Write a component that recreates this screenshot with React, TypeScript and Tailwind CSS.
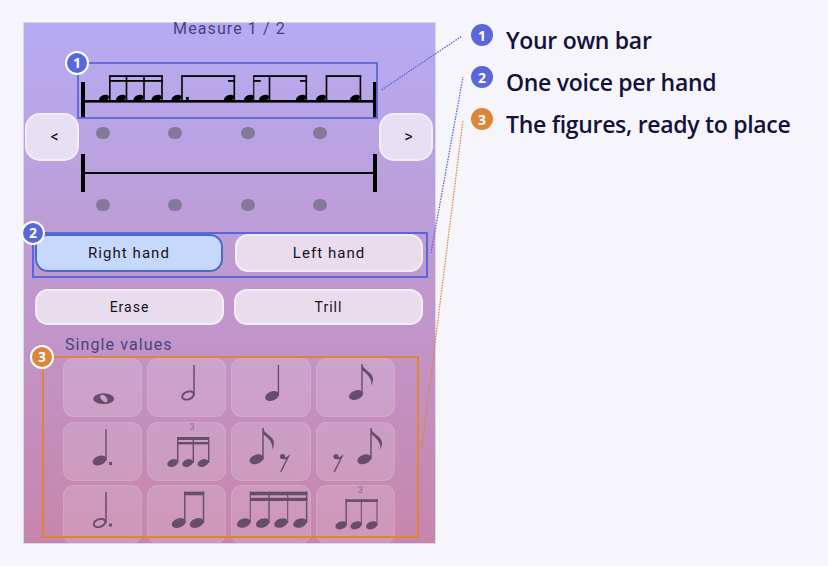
import React from "react";

const ROBOTO = "font-['Roboto',sans-serif]";

function Head({ x, y, rx = 5.2, ry = 3.2 }: { x: number; y: number; rx?: number; ry?: number }) {
  return <ellipse cx={x} cy={y} rx={rx} ry={ry} transform={`rotate(-22 ${x} ${y})`} />;
}

function FirstStaff() {
  const stems = [109.8, 126.5, 144, 162, 182, 234.3, 254, 269.5, 306.3, 326.5, 360.4];
  const heads = [104, 121, 138.5, 156.5, 176.5, 229, 249, 264, 301, 321, 355];
  return (
    <svg width="298" height="48" viewBox="80 72 298 48" className="block">
      <g fill="#000">
        {heads.map((x) => (
          <Head key={x} x={x} y={98.3} />
        ))}
        <rect x="81" y="82" width="4" height="36" />
        <rect x="373" y="82" width="4" height="36" />
        <rect x="84" y="100" width="290" height="2.6" />
        {stems.map((x) => (
          <rect key={x} x={x - 0.8} y="75.5" width={x === 254 ? 1.1 : 1.6} height="24.5" />
        ))}
        <rect x="109" y="75.2" width="54" height="1.8" />
        <rect x="109" y="80" width="54" height="1.8" />
        <rect x="181.2" y="75.2" width="54" height="1.8" />
        <rect x="228" y="80" width="7" height="1.8" />
        <rect x="253.5" y="75.2" width="53.6" height="1.8" />
        <rect x="254" y="80" width="6.8" height="1.8" />
        <rect x="300" y="80" width="7" height="1.8" />
        <rect x="325.8" y="75.2" width="35.4" height="1.8" />
        <rect x="186" y="97" width="2.8" height="2.8" />
      </g>
    </svg>
  );
}

function SecondStaff() {
  return (
    <svg width="298" height="38" viewBox="80 154 298 38" className="block">
      <g fill="#000">
        <rect x="81" y="154" width="4" height="38" />
        <rect x="373" y="154" width="4" height="38" />
        <rect x="84" y="172" width="290" height="2" />
      </g>
    </svg>
  );
}

function Beats() {
  return (
    <div className="flex gap-[58.3px] pl-4">
      {[0, 1, 2, 3].map((i) => (
        <div key={i} className="h-3 w-3.5 rounded-full bg-[#85799a]" />
      ))}
    </div>
  );
}

function Arrow({ label }: { label: string }) {
  return (
    <button className="mt-[41px] flex h-12 w-[54px] shrink-0 items-center justify-center rounded-[15px] border-2 border-[#f3eef8] bg-[#e7dff3] pl-[5px] text-[16px] text-[#111]">
      {label}
    </button>
  );
}

function Btn({ label, active, h, w, small }: { label: string; active?: boolean; h: string; w: string; small?: boolean }) {
  return (
    <button
      className={`flex items-center justify-center rounded-[13px] border-2 ${h} ${w} ${
        active ? "border-[#4a6cc8] bg-[#c6d9fd]" : "border-[#f4edf6] bg-[#e9dced]"
      } ${small ? "text-[14px] tracking-[1px]" : "text-[15px] tracking-[1.05px]"} text-[#16131c]`}
    >
      {label}
    </button>
  );
}

const INK = "#664d6b";

function Svg({ children }: { children: React.ReactNode }) {
  return (
    <svg width="80" height="59" viewBox="0 0 80 59" className="absolute left-0 top-0" fill={INK} stroke="none">
      {children}
    </svg>
  );
}

function Note({ x, y, stem, top, rx = 7.2, ry = 4.6, sw = 1.4 }: { x: number; y: number; stem: number; top: number; rx?: number; ry?: number; sw?: number }) {
  return (
    <>
      <ellipse cx={x} cy={y} rx={rx} ry={ry} transform={`rotate(-20 ${x} ${y})`} />
      <rect x={stem - sw / 2} y={top} width={sw} height={y - top} />
    </>
  );
}

function Hollow({ x, y, stem, top }: { x: number; y: number; stem: number; top: number }) {
  return (
    <>
      <ellipse cx={x} cy={y} rx={6} ry={3.8} transform={`rotate(-20 ${x} ${y})`} fill="none" stroke={INK} strokeWidth="1.9" />
      <rect x={stem - 0.75} y={top} width="1.5" height={y - top} />
    </>
  );
}

function Flag({ x, y }: { x: number; y: number }) {
  return (
    <path d={`M${x} ${y} C${x + 1} ${y + 6} ${x + 11} ${y + 8} ${x + 11} ${y + 15} C${x + 11} ${y + 18} ${x + 10} ${y + 20} ${x + 9} ${y + 22} C${x + 10} ${y + 18} ${x + 9.5} ${y + 13} ${x} ${y + 6} Z`} />
  );
}

function Rest({ x, y }: { x: number; y: number }) {
  return (
    <>
      <circle cx={x} cy={y} r="2.6" />
      <path d={`M${x - 2} ${y - 1} C${x + 1} ${y + 3} ${x + 4} ${y + 1} ${x + 7} ${y - 2} L${x + 7.4} ${y - 1.6} L${x - 1} ${y + 15.4} L${x - 2.4} ${y + 15} L${x + 4} ${y + 2.6} C${x + 1} ${y + 3.6} ${x - 1} ${y + 2} ${x - 2} ${y - 1} Z`} />
    </>
  );
}

function Three({ x, y }: { x: number; y: number }) {
  return (
    <text x={x} y={y} fontSize="9" textAnchor="middle" fill="#8b6a8e" fontFamily="Roboto, sans-serif">
      3
    </text>
  );
}

const figures: React.ReactNode[] = [
  <Svg key="a">
    <path fillRule="evenodd" d="M29.2 39.7a10.5 5.4 0 1 0 21 0a10.5 5.4 0 1 0 -21 0Z M36.5 36.5c1.5 -1 3 -.8 4.5 .5c2 1.7 3.2 4.5 2.2 5.6c-1 1 -3 .6 -4.7 -1c-1.6 -1.5 -3 -4.2 -2 -5.1Z" />
  </Svg>,
  <Svg key="b">
    <Hollow x={40} y={36.5} stem={46} top={6} />
  </Svg>,
  <Svg key="c">
    <Note x={40} y={37} stem={46.4} top={6} />
  </Svg>,
  <Svg key="d">
    <Note x={39} y={36} stem={45} top={5} />
    <Flag x={45} y={5} />
  </Svg>,
  <Svg key="e">
    <Note x={35.5} y={37.5} stem={42} top={6.3} />
    <rect x="45" y="39" width="3" height="3" />
  </Svg>,
  <Svg key="f">
    <Three x={44} y={7} />
    <Note x={24.7} y={40} stem={29.7} top={14} rx={5.6} ry={3.6} />
    <Note x={39.7} y={40} stem={45.3} top={14} rx={5.6} ry={3.6} />
    <Note x={55} y={40} stem={60.7} top={14} rx={5.6} ry={3.6} />
    <rect x="29" y="14" width="32" height="3" />
    <rect x="29" y="19" width="32" height="2.4" />
  </Svg>,
  <Svg key="g">
    <Note x={24.5} y={36.3} stem={31} top={5} />
    <Flag x={31} y={5} />
    <Rest x={50.5} y={33.5} />
  </Svg>,
  <Svg key="h">
    <Rest x={19} y={33.5} />
    <Note x={47.3} y={36.3} stem={54} top={5} />
    <Flag x={54} y={5} />
  </Svg>,
  <Svg key="i">
    <Hollow x={35.5} y={37} stem={42} top={6} />
    <rect x="45" y="37.5" width="3" height="3" />
  </Svg>,
  <Svg key="j">
    <Note x={30.7} y={37} stem={36.8} top={5.7} />
    <Note x={48.7} y={37} stem={55.5} top={5.7} />
    <rect x="36" y="5.7" width="20.2" height="3.6" />
  </Svg>,
  <Svg key="k">
    <Note x={11.7} y={37} stem={18.3} top={5.7} rx={7} ry={4.4} sw={1} />
    <Note x={30.7} y={37} stem={37} top={5.7} rx={7} ry={4.4} />
    <Note x={49} y={37} stem={55.7} top={5.7} rx={7} ry={4.4} sw={1} />
    <Note x={68} y={37} stem={74.6} top={5.7} rx={7} ry={4.4} />
    <rect x="18" y="5.7" width="57.4" height="3.6" />
    <rect x="18" y="11.8" width="57.4" height="3.2" />
  </Svg>,
  <Svg key="l">
    <Three x={43.3} y={7} />
    <Note x={24} y={39.3} stem={29.2} top={13.3} rx={5.8} ry={3.8} />
    <Note x={39} y={39.3} stem={44.3} top={13.3} rx={5.8} ry={3.8} sw={1} />
    <Note x={54.7} y={39.3} stem={60} top={13.3} rx={5.8} ry={3.8} sw={1} />
    <rect x="28.5" y="13.3" width="32.5" height="2.6" />
  </Svg>,
];

function Badge({ n, color, className = "" }: { n: number; color: string; className?: string }) {
  return (
    <div
      className={`flex h-[24px] w-[24px] items-center justify-center rounded-full border-2 border-white text-[14px] font-bold leading-none text-white font-['Open_Sans',sans-serif] ${color} ${className}`}
    >
      {n}
    </div>
  );
}

function Legend({ n, color, text }: { n: number; color: string; text: string }) {
  return (
    <li className="flex h-[42px] items-center">
      <div className={`flex h-[22px] w-[22px] shrink-0 -translate-y-[5px] items-center justify-center rounded-full text-[14px] font-bold text-white ${color}`}>{n}</div>
      <span className="ml-[13px] whitespace-nowrap text-[23px] font-semibold tracking-[-0.3px] text-[#14123a]">{text}</span>
    </li>
  );
}

export default function App() {
  return (
    <div className="relative flex h-[566px] w-[828px] items-start overflow-hidden bg-[#f6f5fc] pl-[23px] pt-[22px] font-['Open_Sans',sans-serif]">
      <div className={`h-[522px] w-[413px] shrink-0 border border-[#d9d5ea] bg-gradient-to-b from-[#b5abf3] to-[#c785ac] ${ROBOTO}`}>
        <h1 className="text-center text-[16px] font-normal leading-[12px] tracking-[1.1px] text-[#48427e]">Measure 1 / 2</h1>

        <div className="mt-[37px] flex pl-px">
          <Arrow label="<" />
          <div className="ml-px w-[298px] shrink-0">
            <FirstStaff />
            <div className="mt-[7px]">
              <Beats />
            </div>
            <div className="mt-[15px]">
              <SecondStaff />
            </div>
            <div className="mt-[7px]">
              <Beats />
            </div>
          </div>
          <div className="ml-px">
            <Arrow label=">" />
          </div>
        </div>

        <div className="mt-[23px] flex gap-[12px] pl-[11px]">
          <Btn label="Right hand" active h="h-[38px]" w="w-[188px]" />
          <Btn label="Left hand" h="h-[38px]" w="w-[188px]" />
        </div>
        <div className="mt-[17px] flex gap-[10px] pl-[11px]">
          <Btn label="Erase" small h="h-[36px]" w="w-[189px]" />
          <Btn label="Trill" small h="h-[36px]" w="w-[189px]" />
        </div>

        <div className="ml-[41px] mt-[12px] text-[16px] leading-4 tracking-[1.1px] text-[#4a4280]">Single values</div>

        <div className="ml-[39px] mt-[5px] h-[185px] overflow-hidden">
          <div className="grid grid-cols-[79px_79px_80px_79px] grid-rows-[59px_59px_59px] gap-x-[5px] gap-y-[4.5px]">
            {figures.map((f, i) => (
              <div key={i} className="relative rounded-[11px] border border-white/10 bg-white/15">
                {f}
              </div>
            ))}
          </div>
        </div>
      </div>

      <ul className="ml-[35px] mt-[-3px]">
        <Legend n={1} color="bg-[#5a67d8]" text="Your own bar" />
        <Legend n={2} color="bg-[#5a67d8]" text="One voice per hand" />
        <Legend n={3} color="bg-[#dd853a]" text="The figures, ready to place" />
      </ul>

      {/* Annotations lying over the screenshot */}
      <div className="absolute left-[77px] top-[62px] h-[57px] w-[301px] border-2 border-[#5a67d8]/90" />
      <div className="absolute left-[32px] top-[232px] h-[46px] w-[396px] border-2 border-[#5a67d8]" />
      <div className="absolute left-[42px] top-[356px] h-[182px] w-[377px] border-2 border-[#dd853a]" />
      <Badge n={1} color="bg-[#5a67d8]" className="absolute left-[65px] top-[51px]" />
      <Badge n={2} color="bg-[#5a67d8]" className="absolute left-[21px] top-[221px]" />
      <Badge n={3} color="bg-[#dd853a]" className="absolute left-[30px] top-[345px]" />
      <svg width="828" height="566" className="pointer-events-none absolute left-0 top-0">
        <line x1="381.5" y1="90" x2="462" y2="36" stroke="#5a67d8" strokeWidth="1.3" strokeDasharray="1.5 1.2" />
        <line x1="431" y1="253" x2="463" y2="77" stroke="#5a67d8" strokeWidth="1.3" strokeDasharray="1.5 1.2" />
        <line x1="422" y1="447" x2="463" y2="120" stroke="#dd853a" strokeWidth="1.3" strokeDasharray="1.5 1.2" />
      </svg>
    </div>
  );
}
